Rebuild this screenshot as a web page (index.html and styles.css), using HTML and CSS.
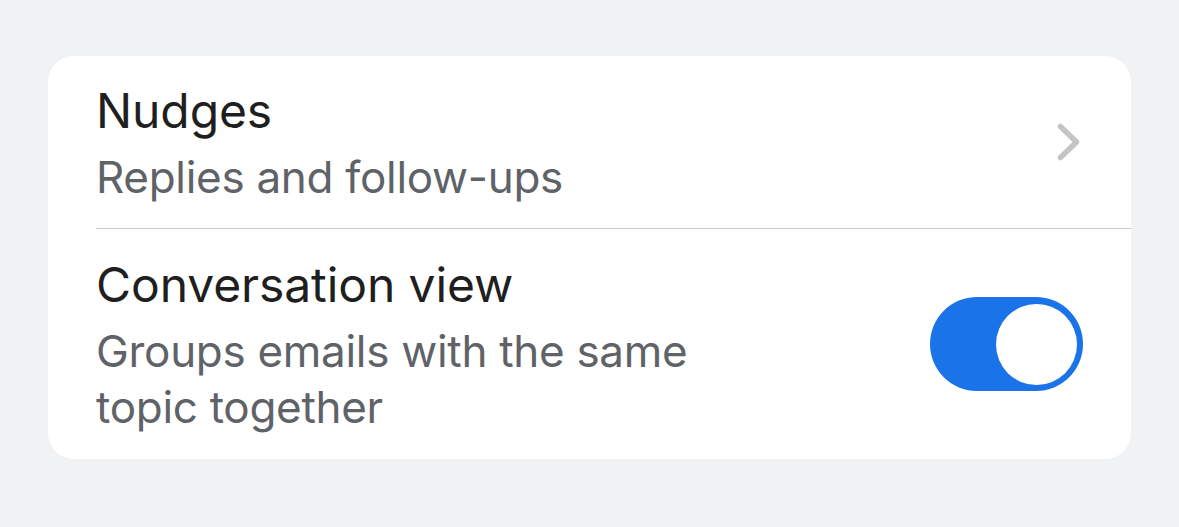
FILE: index.html
```html
<!DOCTYPE html>
<html>
<head>
<meta charset="utf-8">
<link rel="stylesheet" href="styles.css">
</head>
<body>
<div class="card">
  <div class="row row-nav">
    <div class="text">
      <div class="title">Nudges</div>
      <div class="subtitle">Replies and follow-ups</div>
    </div>
    <svg class="chevron" width="24" height="38" viewBox="0 0 24 38">
      <path d="M3.5 3.5 L19.5 19 L3.5 34.5" fill="none" stroke="#c4c4c7" stroke-width="5.5" stroke-linecap="round" stroke-linejoin="round"/>
    </svg>
  </div>
  <div class="divider"></div>
  <div class="row row-toggle">
    <div class="text narrow">
      <div class="title">Conversation view</div>
      <div class="subtitle">Groups emails with the same topic together</div>
    </div>
    <div class="toggle"><div class="knob"></div></div>
  </div>
</div>
</body>
</html>
```
FILE: styles.css
```css
html, body {
  margin: 0;
  padding: 0;
  background: #f1f2f4;
}
body {
  padding: 56px 48px 0 48px;
  font-family: Inter, "Liberation Sans", sans-serif;
}
.card {
  background: #ffffff;
  border-radius: 26px;
  height: 403px;
  display: flex;
  flex-direction: column;
}
.row {
  display: flex;
  align-items: center;
  justify-content: space-between;
  padding: 0 48px 0 48px;
}
.row-nav {
  height: 172px;
  padding-right: 50px;
}
.row-toggle {
  flex: 1;
}
.text {
  display: flex;
  flex-direction: column;
  gap: 8px;
}
.narrow {
  max-width: 640px;
}
.title {
  font-size: 48px;
  line-height: 61px;
  color: #1f1f1f;
  letter-spacing: -0.1px;
}
.subtitle {
  font-size: 44px;
  line-height: 56px;
  color: #5f6368;
  letter-spacing: -0.3px;
}
.divider {
  height: 1px;
  background: #c9c9cc;
  margin-left: 48px;
}
.toggle {
  width: 153px;
  height: 94px;
  border-radius: 47px;
  background: #1a73e8;
  display: flex;
  align-items: center;
  justify-content: flex-end;
  padding: 0 6px;
  box-sizing: border-box;
}
.knob {
  width: 81px;
  height: 81px;
  border-radius: 50%;
  background: #ffffff;
}
```
